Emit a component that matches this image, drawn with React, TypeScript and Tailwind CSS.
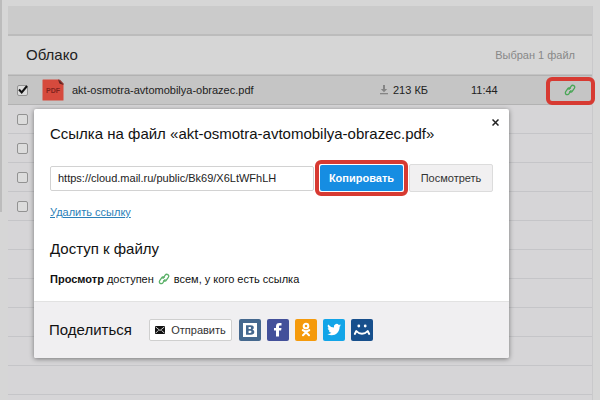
import { useState } from "react";
import type { ReactNode } from "react";
import clsx from "clsx";

const FILE_NAME = "akt-osmotra-avtomobilya-obrazec.pdf";
const FILE_URL = "https://cloud.mail.ru/public/Bk69/X6LtWFhLH";

function LinkIcon({ className }: { className?: string }) {
  return (
    <svg
      viewBox="0 0 12 12"
      className={clsx("size-3 shrink-0", className)}
      fill="none"
      stroke="currentColor"
      strokeWidth="1.3"
      strokeLinecap="round"
      aria-hidden="true"
    >
      <path d="M5 5.400 7.200 2.100a1.900 1.900 0 0 1 3.100 2.200L8.200 7.300a1.700 1.700 0 0 1-2.400.4" />
      <path d="M7 6.600 4.800 9.900a1.900 1.900 0 0 1-3.100-2.200l2.100-3a1.700 1.700 0 0 1 2.400-.4" />
    </svg>
  );
}

function PdfIcon() {
  return (
    <svg viewBox="0 0 22 22" className="size-[22px] shrink-0" aria-hidden="true">
      <path d="M1 .5h15.500L21.500 5.500V21a.5.5 0 0 1-.5.5H1a.5.5 0 0 1-.5-.5V1A.5.5 0 0 1 1 .5z" fill="#d64a3d" />
      <path d="M16 .5 21.500 6V4.500L18 .8z" fill="#8c2c26" />
      <path d="M16 .5 21.500 6l-4-1.500z" fill="#55231f" />
      <text
        x="11"
        y="13.500"
        textAnchor="middle"
        fill="#82231d"
        fontSize="7"
        fontWeight="700"
        fontFamily="Liberation Sans, Arial, sans-serif"
      >
        PDF
      </text>
    </svg>
  );
}

function DownloadIcon() {
  return (
    <svg viewBox="0 0 8 10" className="h-[10px] w-2 shrink-0" fill="#858585" aria-hidden="true">
      <path d="M3 0h2v4h2.200L4 7.200.8 4H3z" />
      <path d="M0 8h8v1.300H0z" />
    </svg>
  );
}

function Mark({ className }: { className: string }) {
  return <span aria-hidden="true" className={clsx("pointer-events-none absolute rounded-md border-4 border-[#d73a32]", className)} />;
}

function RowCheckbox({ label, checked = false }: { label: string; checked?: boolean }) {
  const [on, setOn] = useState(checked);

  return (
    <span className="relative flex size-[11px] shrink-0">
      <input
        type="checkbox"
        aria-label={label}
        checked={on}
        onChange={(e) => setOn(e.target.checked)}
        className="size-[11px] appearance-none rounded-xs border border-[#929292] bg-[#dcdcdc]"
      />
      {on && (
        <svg viewBox="0 0 11 11" className="pointer-events-none absolute inset-0 size-[11px]" fill="none" stroke="#111" strokeWidth="2" aria-hidden="true">
          <path d="M2 4.500 4.700 7.500 10 1" />
        </svg>
      )}
    </span>
  );
}

const shares: Array<{ name: string; color: string; icon: ReactNode }> = [
  {
    name: "ВКонтакте",
    color: "bg-[#45688e]",
    icon: (
      <>
        <path d="M4 4h14v14H4z" fill="#fff" />
        <path
          d="M7 6.200h4.600c2 0 3.200.8 3.200 2.400 0 1-.5 1.700-1.400 2.100 1.200.3 1.900 1.100 1.900 2.300 0 1.800-1.300 2.800-3.500 2.800H7zm2.600 1.900V10h1.300c.8 0 1.200-.3 1.200-1s-.4-.9-1.200-.9zm0 3.600v2.200h1.500c.9 0 1.400-.4 1.400-1.100s-.5-1.100-1.400-1.100z"
          fill="#45688e"
          fillRule="evenodd"
        />
      </>
    ),
  },
  {
    name: "Facebook",
    color: "bg-[#43509a]",
    icon: (
      <path d="M9 17.500V11.500H7V9h2V7.400C9 5.200 10.200 4 12.400 4H14.500v2.500h-1.300c-.9 0-1.200.4-1.200 1.100V9h2.500l-.4 2.500H12v6z" fill="#fff" />
    ),
  },
  {
    name: "Одноклассники",
    color: "bg-[#f59a0c]",
    icon: (
      <g fill="none" stroke="#fff" strokeWidth="2.100" strokeLinecap="round">
        <circle cx="11" cy="7" r="2.300" />
        <path d="M7.800 11.200c2 1.400 4.400 1.400 6.400 0M11 12.500v.8M11 13.200l-3 3M11 13.200l3 3" />
      </g>
    ),
  },
  {
    name: "Twitter",
    color: "bg-[#12a5e8]",
    icon: (
      <path
        d="M18 6.300c-.5.2-1 .4-1.600.5.600-.4 1-.9 1.200-1.600-.5.300-1.100.6-1.800.7a2.800 2.800 0 0 0-4.800 2.600A8 8 0 0 1 5.200 5.500a2.800 2.800 0 0 0 .9 3.800c-.5 0-.9-.1-1.300-.4 0 1.400 1 2.500 2.300 2.800-.4.1-.8.1-1.300 0 .4 1.200 1.400 2 2.600 2A5.700 5.700 0 0 1 4.300 15c5.600 3.500 12.300-.3 12.300-6.900v-.4c.5-.4 1-.8 1.400-1.400z"
        fill="#fff"
      />
    ),
  },
  {
    name: "Мой Мир",
    color: "bg-[#174f8c]",
    icon: (
      <g fill="none" stroke="#fff" strokeWidth="1.900" strokeLinecap="round" strokeLinejoin="round">
        <circle cx="7.800" cy="7" r="1.400" fill="#fff" stroke="none" />
        <circle cx="14.200" cy="7" r="1.400" fill="#fff" stroke="none" />
        <path d="M3.800 15 5.300 12c3 3.600 8.400 3.600 11.400 0l1.500 3" />
      </g>
    ),
  },
];

function FileList() {
  return (
    <main className="mt-[6px] mr-[7px] ml-2 flex-1 border-r border-[#c9c9cb]">
      <div className="h-[30px] border-b-2 border-[#bcbcbc] bg-[#cbcbcb]" />
      <header className="flex h-[39px] items-center justify-between border-b border-[#c3c3c3] pr-[17px] pl-[18px]">
        <h1 className="text-[15px] text-[#222]">Облако</h1>
        <span className="text-[11px] text-[#888]">Выбран 1 файл</span>
      </header>

      <ul>
        <li className="relative flex h-[30px] items-center border-y border-[#b2b2b2] bg-[#c5c5c5] pr-4 pl-[9px] text-[#222]">
          <RowCheckbox label={FILE_NAME} checked />
          <span className="ml-[14px] flex flex-1 items-center gap-2">
            <PdfIcon />
            <span className="text-[11px]">{FILE_NAME}</span>
          </span>
          <span className="flex w-[91px] items-center gap-[5px] text-[11px]">
            <DownloadIcon />
            213 КБ
          </span>
          <time className="w-[93px] text-[11px]">11:44</time>
          <button type="button" aria-label="Ссылка на файл" className="text-[#4aa657]">
            <LinkIcon />
          </button>
          <Mark className="top-[1px] -right-[3px] h-7 w-[49px]" />
        </li>
        {Array.from({ length: 11 }, (_, i) => (
          <li key={i} className="flex h-[29px] items-center border-b border-[#c5c5c8] bg-[#d6d5d7] pl-[9px]">
            {i < 4 && <RowCheckbox label={`Файл ${i + 2}`} />}
          </li>
        ))}
      </ul>
    </main>
  );
}

function ShareDialog({ onClose }: { onClose: () => void }) {
  const [copied, setCopied] = useState(false);

  const copy = () => {
    void navigator.clipboard?.writeText(FILE_URL).then(() => setCopied(true));
  };

  return (
    <section
      role="dialog"
      aria-labelledby="share-title"
      data-copied={copied}
      className="absolute top-[109px] left-[34px] w-[475px] overflow-hidden rounded-xs bg-white text-[#111] shadow-[0_1px_5px_rgba(0,0,0,0.45)]"
    >
      <button type="button" aria-label="Закрыть" onClick={onClose} className="absolute top-[9px] right-[9px] p-[1px]">
        <svg viewBox="0 0 7 7" className="size-[7px]" stroke="#222" strokeWidth="1.500" aria-hidden="true">
          <path d="m.5.5 6 6M6.500.5l-6 6" />
        </svg>
      </button>

      <div className="px-4 pt-[13px] pb-[14px]">
        <h2 id="share-title" className="text-[15px] leading-6 whitespace-nowrap">
          Ссылка на файл «{FILE_NAME}»
        </h2>

        <div className="mt-[18px] flex items-center">
          <input
            type="text"
            readOnly
            aria-label="Ссылка"
            value={FILE_URL}
            className="h-[25px] min-w-0 flex-1 rounded-xs border border-[#d2d2d2] px-[7px] text-[11px] text-[#222]"
          />
          <span className="relative ml-[6px]">
            <button type="button" onClick={copy} className="block h-[26px] w-[83px] rounded-xs bg-[#168de2] text-[11px] font-bold text-white">
              Копировать
            </button>
            <Mark className="-inset-x-[5px] -inset-y-[5px]" />
          </span>
          <button type="button" className="ml-[6px] h-7 w-[84px] rounded-xs border border-[#dcdcdc] bg-[#f1f0f1] text-[11px] text-[#333]">
            Посмотреть
          </button>
        </div>

        <a href="#delete" className="mt-3 block w-fit text-[11px] leading-4 text-[#2b7fb8] underline">
          Удалить ссылку
        </a>

        <h2 className="mt-[17px] text-[15px] leading-6">Доступ к файлу</h2>
        <p className="mt-[10px] flex items-center text-[11px] leading-4">
          <b>Просмотр</b>&nbsp;доступен
          <LinkIcon className="mx-1 text-[#5cb169]" />
          всем, у кого есть ссылка
        </p>
      </div>

      <footer className="flex h-[57px] items-center border-t border-[#e2e2e2] bg-[#f0eff1] px-[15px]">
        <h2 className="w-[100px] text-[15px]">Поделиться</h2>
        <button type="button" className="mr-[7px] flex h-[22px] w-[83px] items-center justify-center gap-[6px] rounded-xs border border-[#cfcfcf] bg-white text-[11px] text-[#333]">
          <svg viewBox="0 0 10 8" className="h-2 w-[10px] shrink-0" aria-hidden="true">
            <path d="M0 0h10v8H0z" fill="#111" />
            <path d="m.5.800 4.500 3.700L9.500.8M.5 7.300l3-3M9.500 7.300l-3-3" fill="none" stroke="#fff" strokeWidth=".8" />
          </svg>
          Отправить
        </button>
        <div className="flex gap-[6px]">
          {shares.map((s) => (
            <button key={s.name} type="button" aria-label={s.name} className={clsx("size-[22px] rounded-xs", s.color)}>
              <svg viewBox="0 0 22 22" className="size-[22px]" aria-hidden="true">
                {s.icon}
              </svg>
            </button>
          ))}
        </div>
      </footer>
    </section>
  );
}

export default function App() {
  const [open, setOpen] = useState(true);

  return (
    <div className="relative flex h-dvh overflow-hidden bg-[#d6d6d6] font-['Liberation_Sans',Arial,sans-serif]">
      <div className="mr-[-2px] h-[212px] w-[2px] shrink-0 bg-[#bcbcbc]" />
      <FileList />
      {open && <ShareDialog onClose={() => setOpen(false)} />}
    </div>
  );
}
